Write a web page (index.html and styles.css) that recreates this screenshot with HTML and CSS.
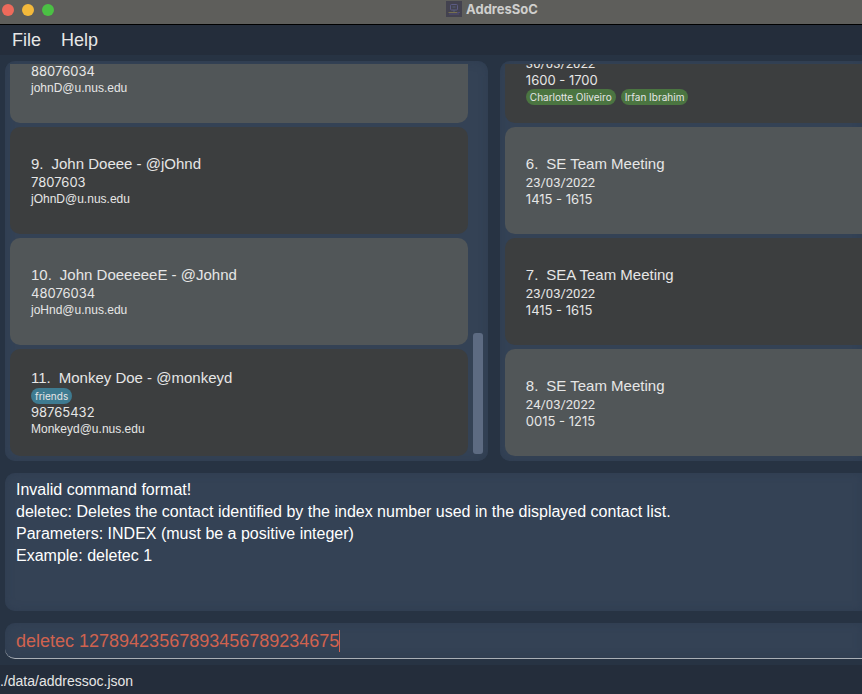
FILE: index.html
```html
<!DOCTYPE html>
<html lang="en">
<head>
<meta charset="utf-8">
<title>AddresSoC</title>
<link rel="stylesheet" href="styles.css">
</head>
<body>
<header class="titlebar">
  <div class="lights"><i class="light red"></i><i class="light yellow"></i><i class="light green"></i></div>
  <h1 class="title">
    <svg class="appicon" viewBox="0 0 16 16" width="16" height="16" aria-hidden="true">
      <rect width="16" height="16" fill="#43424f"/>
      <rect x="4.5" y="3.5" width="7" height="5.5" rx="1" fill="none" stroke="#5c5c84"/>
      <path d="M6.5 6h3M8 9v2" stroke="#55607a" fill="none"/>
      <path d="M2.5 11.5h9" stroke="#77704f"/>
      <path d="M11.5 11.5h2.5M3 13h10" stroke="#504d78"/>
    </svg>
    AddresSoC
  </h1>
</header>
<nav class="menubar">
  <button type="button">File</button>
  <button type="button">Help</button>
</nav>
<main class="content">
  <div class="lists">
    <section class="panel contacts" aria-label="Contacts">
      <ul class="list">
        <li class="card light-card"><h2></h2><p>88076034</p><p class="email">johnD@u.nus.edu</p></li>
        <li class="card"><h2><span>9.</span>John Doeee - @jOhnd</h2><p>7807603</p><p class="email">jOhnD@u.nus.edu</p></li>
        <li class="card light-card"><h2><span>10.</span>John DoeeeeeE - @Johnd</h2><p>48076034</p><p class="email">joHnd@u.nus.edu</p></li>
        <li class="card"><h2><span>11.</span>Monkey Doe - @monkeyd</h2><div class="tags"><span class="tag">friends</span></div><p>98765432</p><p class="email">Monkeyd@u.nus.edu</p></li>
      </ul>
      <div class="scrollbar"><div class="thumb"></div></div>
    </section>
    <section class="panel events" aria-label="Events">
      <ul class="list">
        <li class="card"><h2></h2><p class="date">30/03/2022</p><p>1600 - 1700</p><div class="tags"><span class="tag person">Charlotte Oliveiro</span><span class="tag person">Irfan Ibrahim</span></div></li>
        <li class="card light-card"><h2><span>6.</span>SE Team Meeting</h2><p class="date">23/03/2022</p><p>1415 - 1615</p></li>
        <li class="card"><h2><span>7.</span>SEA Team Meeting</h2><p class="date">23/03/2022</p><p>1415 - 1615</p></li>
        <li class="card light-card"><h2><span>8.</span>SE Team Meeting</h2><p class="date">24/03/2022</p><p>0015 - 1215</p></li>
      </ul>
    </section>
  </div>
  <textarea class="result" aria-label="Result" readonly>Invalid command format!
deletec: Deletes the contact identified by the index number used in the displayed contact list.
Parameters: INDEX (must be a positive integer)
Example: deletec 1</textarea>
  <div class="command">
    <input type="text" aria-label="Command" value="deletec 12789423567893456789234675">
    <span class="caret"></span>
  </div>
</main>
<footer class="status">./data/addressoc.json</footer>
</body>
</html>
```
FILE: styles.css
```css
* { box-sizing: border-box; }
body {
  margin: 0;
  height: 100vh;
  display: flex;
  flex-direction: column;
  overflow: hidden;
  background: #273343;
  color: #e6e6e6;
  font-family: "Liberation Sans", sans-serif;
  font-size: 13px;
}
h1, h2, p, ul { margin: 0; padding: 0; font-weight: 400; }

.titlebar {
  display: grid;
  grid-template-columns: 1fr auto 1fr;
  height: 25px;
  flex: none;
  padding: 0 0 0 2px;
  background: #5e5e5b;
  border-bottom: 1px solid #000;
}
.lights { display: flex; gap: 8px; padding-top: 4px; }
.light { width: 12px; height: 12px; border-radius: 50%; }
.red { background: #ee6a5b; }
.yellow { background: #f3b93b; }
.green { background: #4bc044; }
.title {
  display: flex;
  align-items: center;
  gap: 4px;
  height: 18px;
  color: #cfcfcd;
  font-family: Inter, "Liberation Sans", sans-serif;
  font-size: 13px;
  font-weight: 700;
  grid-column: 2;
  margin-left: 120px;
}

.menubar {
  display: flex;
  gap: 20px;
  height: 30px;
  flex: none;
  padding: 0 12px;
  background: #242d3b;
}
.menubar button {
  border: 0;
  padding: 0;
  background: none;
  color: #e6e6e6;
  font: 18px/30px "Liberation Sans", sans-serif;
}

.content {
  flex: 1;
  min-height: 0;
  display: flex;
  flex-direction: column;
  gap: 12px;
  padding: 6px 0 6px 5px;
}
.lists {
  flex: 1;
  min-height: 0;
  display: grid;
  grid-template-columns: 4fr 3fr;
  grid-template-rows: 100%;
  gap: 12px;
}
.panel {
  display: flex;
  gap: 5px;
  padding: 3px 5px 5px;
  background: #344255;
  border-radius: 10px;
  box-shadow: inset 0 0 8px #2e3c50;
}
.events { padding-right: 0; border-radius: 10px 0 0 10px; }
.list {
  flex: 1;
  min-width: 0;
  display: flex;
  flex-direction: column;
  justify-content: flex-end;
  gap: 4px;
  overflow: hidden;
  list-style: none;
}
.card {
  flex: none;
  height: 107px;
  display: flex;
  flex-direction: column;
  justify-content: center;
  padding: 0 21px;
  background: #3c3e3f;
  border-radius: 10px;
}
.events .card { border-radius: 10px 0 0 10px; }
.card.light-card { background: #515658; }
.card h2 { height: 20px; font-size: 15px; line-height: 20px; white-space: nowrap; }
.card h2 span { margin-right: 8px; }
.card p { font-family: Inter, "Liberation Sans", sans-serif; line-height: 17px; }
.card .date { font-family: Roboto, "Liberation Sans", sans-serif; }
.card .email { font-family: "Liberation Sans", sans-serif; font-size: 12px; }
.tags { display: flex; gap: 5px; }
.tag {
  height: 16px;
  padding: 0 4px;
  border-radius: 8px;
  background: #3e7b91;
  font-family: Inter, "Liberation Sans", sans-serif;
  font-size: 10px;
  line-height: 16px;
  white-space: nowrap;
}
.tag.person { background: #4b7541; }
.scrollbar { width: 10px; display: flex; flex-direction: column; justify-content: flex-end; padding-bottom: 2px; }
.thumb { height: 31%; border-radius: 3px; background: #5d6b82; }

.result {
  display: block;
  flex: none;
  width: 100%;
  height: 138px;
  padding: 6px 11px;
  border: 0;
  border-radius: 10px 0 0 10px;
  outline: 0;
  resize: none;
  overflow: hidden;
  background: #344255;
  box-shadow: inset 0 0 8px #2e3c50;
  color: #fff;
  font: 16px/22px "Liberation Sans", sans-serif;
}
.command { position: relative; flex: none; height: 36px; }
.command input {
  display: block;
  width: 100%;
  height: 100%;
  padding: 2px 11px 0;
  border: 0;
  border-bottom: 1px solid #a9afb6;
  border-radius: 10px 0 0 10px;
  outline: 0;
  background: #344255;
  box-shadow: inset 0 0 8px #2e3c50;
  color: #d0624f;
  font: 18px "Liberation Sans", sans-serif;
}
.caret { position: absolute; left: 334px; top: 7px; width: 1px; height: 22px; background: #d0624f; }
.status {
  flex: none;
  height: 29px;
  background: #242d3b;
  font-size: 14px;
  line-height: 32px;
}
```
